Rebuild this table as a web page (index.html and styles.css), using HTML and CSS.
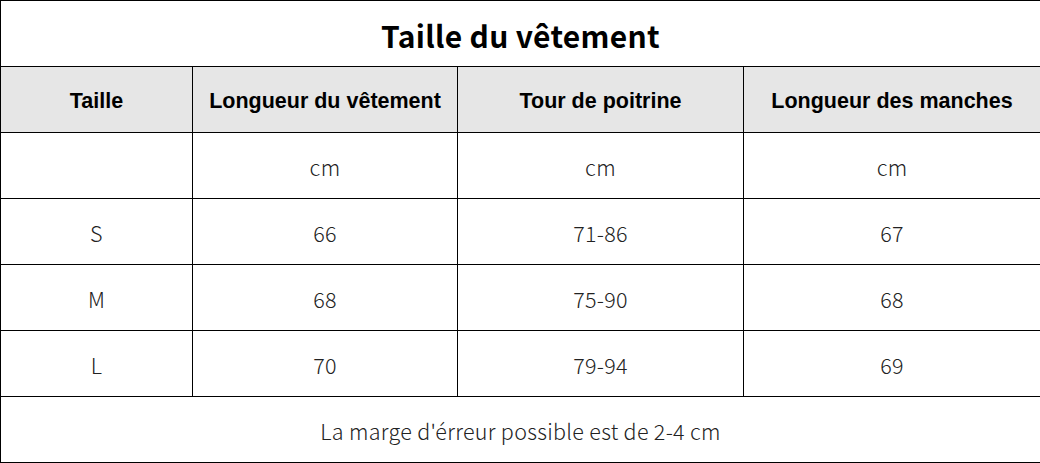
FILE: index.html
```html
<!DOCTYPE html>
<html lang="fr">
<head>
<meta charset="utf-8">
<link rel="stylesheet" href="styles.css">
</head>
<body>
<table class="size-table">
  <colgroup>
    <col class="c1"><col class="c2"><col class="c3"><col class="c4">
  </colgroup>
  <tr class="title-row"><td colspan="4" class="title">Taille du vêtement</td></tr>
  <tr class="head-row">
    <th>Taille</th><th>Longueur du vêtement</th><th>Tour de poitrine</th><th>Longueur des manches</th>
  </tr>
  <tr><td></td><td>cm</td><td>cm</td><td>cm</td></tr>
  <tr><td>S</td><td>66</td><td>71-86</td><td>67</td></tr>
  <tr><td>M</td><td>68</td><td>75-90</td><td>68</td></tr>
  <tr><td>L</td><td>70</td><td>79-94</td><td>69</td></tr>
  <tr><td colspan="4">La marge d'érreur possible est de 2-4 cm</td></tr>
</table>
</body>
</html>
```
FILE: styles.css
```css
html, body {
  margin: 0;
  padding: 0;
  background: #fff;
}
.size-table {
  border-collapse: collapse;
  table-layout: fixed;
  width: 1040px;
  font-family: "Noto Sans CJK SC", "Noto Sans", sans-serif;
  color: #222;
}
.c1 { width: 192px; }
.c2 { width: 265px; }
.c3 { width: 286px; }
.c4 { width: 297px; }
.size-table td, .size-table th {
  border: 1px solid #000;
  height: 62px;
  line-height: 30px;
  padding: 3px 0 0;
  text-align: center;
  vertical-align: middle;
  font-size: 21.5px;
  font-weight: 300;
  letter-spacing: 0.3px;
}
.size-table th {
  background: #e6e6e6;
  font-family: "Liberation Sans", Arial, sans-serif;
  font-weight: bold;
  font-size: 21.5px;
  letter-spacing: 0;
  color: #000;
}
.size-table td.title {
  font-weight: bold;
  font-size: 30px;
  letter-spacing: 0.3px;
  color: #000;
}
```
